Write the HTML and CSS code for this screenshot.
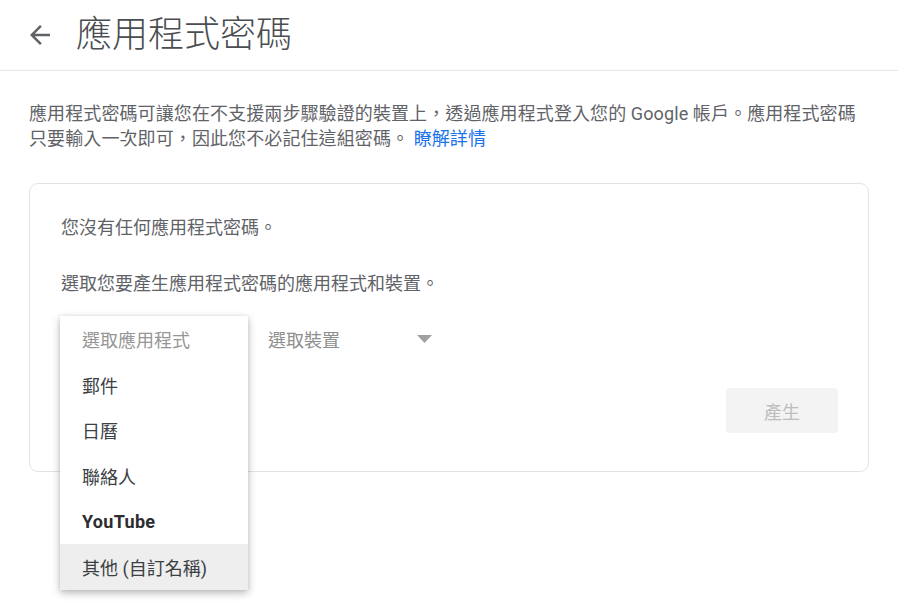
FILE: index.html
```html
<!DOCTYPE html>
<html lang="zh-Hant">
<head>
<meta charset="utf-8">
<title>應用程式密碼</title>
<link rel="stylesheet" href="styles.css">
</head>
<body>
<div class="page">
  <header class="header">
    <a class="back" href="#" aria-label="返回">
      <svg viewBox="0 0 24 24" width="30" height="30"><path d="M20 11H7.83l5.59-5.59L12 4l-8 8 8 8 1.41-1.41L7.83 13H20v-2z" fill="#5f6368"/></svg>
    </a>
    <h1 class="title">應用程式密碼</h1>
  </header>
  <main class="main">
    <p class="intro">應用程式密碼可讓您在不支援兩步驟驗證的裝置上，透過應用程式登入您的 Google 帳戶。應用程式密碼只要輸入一次即可，因此您不必記住這組密碼。 <a class="link" href="#">瞭解詳情</a></p>
    <section class="card">
      <p class="card-text">您沒有任何應用程式密碼。</p>
      <p class="card-text gap">選取您要產生應用程式密碼的應用程式和裝置。</p>
      <div class="selects">
        <div class="select app-select">
          <span class="select-label">選取應用程式</span>
          <ul class="menu">
            <li class="menu-item placeholder">選取應用程式</li>
            <li class="menu-item">郵件</li>
            <li class="menu-item">日曆</li>
            <li class="menu-item">聯絡人</li>
            <li class="menu-item bold">YouTube</li>
            <li class="menu-item active">其他 (自訂名稱)</li>
          </ul>
        </div>
        <div class="select device-select">
          <span class="select-label">選取裝置</span>
          <svg class="caret" viewBox="0 0 15 8" width="15" height="8"><path d="M0 0h15L7.5 8z" fill="#a0a0a0"/></svg>
        </div>
      </div>
      <div class="actions">
        <button class="btn" disabled>產生</button>
      </div>
    </section>
  </main>
</div>
</body>
</html>
```

FILE: styles.css
```css
* { box-sizing: border-box; }
html, body { margin: 0; padding: 0; background: #fff; }
body {
  min-height: 607px;
  font-family: Roboto, "Noto Sans CJK TC", sans-serif;
  color: #5f6368;
}
.page { width: 898px; min-height: 607px; }
.header {
  height: 71px;
  display: flex;
  align-items: center;
  padding-left: 25px;
  padding-bottom: 1px;
  border-bottom: 1px solid #e6e6e6;
}
.back { display: flex; width: 30px; height: 30px; }
.title {
  margin: 0 0 0 21px;
  font-size: 36px;
  font-weight: 200;
  line-height: 44px;
  color: #4a4d51;
}
.main { padding: 0 29px; }
.intro {
  margin: 30px 0 0;
  font-size: 18px;
  line-height: 25px;
  letter-spacing: 0.1px;
  width: 828px;
}
.link { color: #1a73e8; text-decoration: none; }
.card {
  margin-top: 32px;
  border: 1px solid #e3e3e3;
  border-radius: 9px;
  padding: 31px 30px 38px 31px;
}
.card-text { margin: 0; font-size: 18px; line-height: 25px; }
.card-text.gap { margin-top: 31px; }
.selects {
  margin-top: 20px;
  display: flex;
  gap: 20px;
  height: 46px;
}
.select {
  position: relative;
  display: flex;
  align-items: center;
  font-size: 18px;
  color: #8f8f8f;
}
.app-select { width: 187px; padding-left: 21px; }
.device-select { width: 172px; justify-content: space-between; padding-right: 8px; }
.menu {
  position: absolute;
  top: 0;
  left: -1px;
  width: 188px;
  margin: 0;
  padding: 0;
  list-style: none;
  background: #fff;
  box-shadow: 0 3px 8px rgba(0, 0, 0, 0.28), 0 0 3px rgba(0, 0, 0, 0.08);
  z-index: 2;
}
.menu-item {
  height: 45.7px;
  display: flex;
  align-items: center;
  padding-left: 22px;
  font-size: 18px;
  color: #3c4043;
}
.menu-item.placeholder { color: #969696; }
.menu-item.bold { font-weight: 700; color: #2b2d30; letter-spacing: 0.3px; }
.menu-item.active { background: #eeeeee; }
.actions {
  margin-top: 26px;
  display: flex;
  justify-content: flex-end;
}
.btn {
  width: 112px;
  height: 45px;
  border: none;
  border-radius: 4px;
  background: #f3f3f3;
  color: #bdbdbd;
  font-family: inherit;
  font-size: 18px;
}
```
